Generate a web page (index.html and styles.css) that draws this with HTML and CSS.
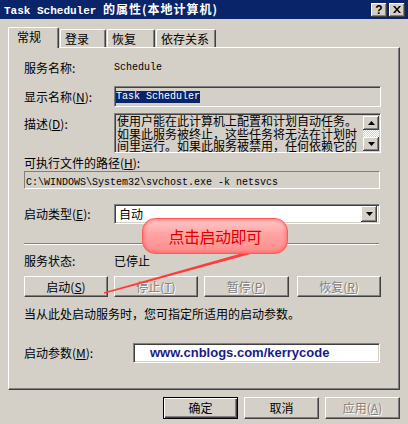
FILE: index.html
```html
<!DOCTYPE html>
<html>
<head>
<meta charset="utf-8">
<link rel="stylesheet" href="styles.css">
</head>
<body>
<div class="titlebar">
  <div class="title"><span class="t-lat">Task Scheduler </span><span class="t-cjk">的属性(本地计算机)</span></div>
  <div class="tb-btns">
    <span class="tb-btn help">?</span>
    <span class="tb-btn close"><svg width="8" height="7" viewBox="0 0 8 7"><path d="M0 0h2l2 2.4L6 0h2L5 3.5L8 7H6L4 4.6L2 7H0l3-3.5z" fill="#000"/></svg></span>
  </div>
</div>

<div class="tabs">
  <div class="tab active">常规</div>
  <div class="tab t2">登录</div>
  <div class="tab t3">恢复</div>
  <div class="tab t4">依存关系</div>
</div>

<div class="panel">
  <div class="row r1"><span class="lbl">服务名称:</span><span class="mono">Schedule</span></div>
  <div class="row r2"><span class="lbl">显示名称(<u>N</u>):</span>
    <div class="field gray disp"><span class="mono sel">Task Scheduler</span></div>
  </div>
  <div class="row r3"><span class="lbl top">描述(<u>D</u>):</span>
    <div class="field gray desc">
      <div class="desc-text">
        <div class="dl">使用户能在此计算机上配置和计划自动任务。</div>
        <div class="dl">如果此服务被终止，这些任务将无法在计划时</div>
        <div class="dl">间里运行。如果此服务被禁用，任何依赖它的</div>
      </div>
      <div class="vscroll">
        <div class="sbtn"><svg width="7" height="4" viewBox="0 0 7 4"><path d="M3.5 0L7 4H0z" fill="#000"/></svg></div>
        <div class="track"></div>
        <div class="sbtn"><svg width="7" height="4" viewBox="0 0 7 4"><path d="M0 0h7L3.5 4z" fill="#000"/></svg></div>
      </div>
    </div>
  </div>
  <div class="row r4"><span>可执行文件的路径(<u>H</u>):</span></div>
  <div class="path"><span class="mono">C:\WINDOWS\System32\svchost.exe -k netsvcs</span></div>
  <div class="row r6"><span class="lbl">启动类型(<u>E</u>):</span>
    <div class="field white combo"><span class="combo-text">自动</span>
      <div class="combo-btn"><svg width="7" height="4" viewBox="0 0 7 4"><path d="M0 0h7L3.5 4z" fill="#000"/></svg></div>
    </div>
  </div>
  <div class="sep"></div>
  <div class="row r7"><span class="lbl">服务状态:</span><span>已停止</span></div>
  <div class="btnrow">
    <div class="btn b1">启动(<u>S</u>)</div>
    <div class="btn b2 dis">停止(<u>T</u>)</div>
    <div class="btn b3 dis">暂停(<u>P</u>)</div>
    <div class="btn b4 dis">恢复(<u>R</u>)</div>
  </div>
  <div class="row r8">当从此处启动服务时，您可指定所适用的启动参数。</div>
  <div class="row r9"><span class="lbl wide">启动参数(<u>M</u>):</span>
    <div class="field white param"><span class="url">www.cnblogs.com/kerrycode</span></div>
  </div>
</div>

<div class="footer">
  <div class="btn fbtn default">确定</div>
  <div class="btn fbtn">取消</div>
  <div class="btn fbtn dis">应用(<u>A</u>)</div>
</div>

<svg class="arrow" width="408" height="424" viewBox="0 0 408 424"><polygon points="252.4,253.6 251.6,250.4 103.8,292.3 104.2,293.7" fill="#ff3b3b"/></svg>
<div class="callout">点击启动即可</div>
</body>
</html>
```
FILE: styles.css
```css
html, body {
  margin: 0;
  padding: 0;
}
body {
  width: 408px;
  height: 424px;
  overflow: hidden;
  position: relative;
  background: #d4d0c8;
  font-family: "Noto Sans CJK SC", sans-serif;
  font-size: 12px;
  line-height: 14px;
  color: #000;
}
u { text-decoration: underline; text-underline-offset: 1px; }

.mono {
  font-family: "Liberation Mono", "Noto Sans CJK SC", monospace;
  font-size: 10px;
}

/* title bar */
.titlebar {
  height: 19px;
  background: #0a246a;
  display: flex;
  align-items: center;
  justify-content: space-between;
  padding: 0 3px 0 4px;
  color: #fff;
}
.title { white-space: pre; line-height: 19px; }
.t-lat {
  font-family: "Liberation Mono", monospace;
  font-weight: bold;
  font-size: 11px;
}
.t-cjk {
  font-weight: bold;
  font-size: 12px;
  letter-spacing: 1px;
}
.tb-btns { display: flex; gap: 2px; }
.tb-btn {
  box-sizing: border-box;
  width: 16px;
  height: 14px;
  background: #d4d0c8;
  box-shadow: inset -1px -1px #404040, inset 1px 1px #fff, inset -2px -2px #808080;
  display: flex;
  align-items: center;
  justify-content: center;
  color: #000;
}
.help {
  font-family: "Liberation Sans", sans-serif;
  font-weight: bold;
  font-size: 12px;
  line-height: 14px;
}
.close svg { display: block; }

/* tabs */
.tabs {
  display: flex;
  align-items: flex-end;
  height: 28px;
  padding-left: 8px;
}
.tab {
  box-sizing: border-box;
  height: 18px;
  border: 1px solid;
  border-color: #fff #404040 transparent #fff;
  border-bottom: none;
  border-radius: 2px 2px 0 0;
  box-shadow: inset -1px 0 #808080;
  padding: 1px 0 0 4px;
  line-height: 16px;
  background: #d4d0c8;
}
.tab.active {
  height: 21px;
  width: 51px;
  margin-bottom: -1px;
  padding-left: 8px;
  position: relative;
  z-index: 1;
}
.t2 { width: 46px; margin-left: 1px; }
.t3 { width: 48px; margin-left: 1px; }
.t4 { width: 60px; margin-left: 1px; }

/* panel */
.panel {
  box-sizing: border-box;
  margin-left: 8px;
  width: 392px;
  height: 343px;
  border: 1px solid;
  border-color: #fff #404040 #404040 #fff;
  box-shadow: inset -1px -1px #808080;
  padding: 0 0 0 15px;
}
.row { display: flex; align-items: center; }
.lbl { width: 90px; flex: none; }
.lbl.top { align-self: flex-start; margin-top: 4px; }
.lbl.wide { width: 109px; }

.r1 { margin-top: 13px; height: 14px; }
.r2 { margin-top: 11px; }
.r3 { margin-top: 6px; }
.r4 { margin-top: 3px; height: 14px; }
.r6 { margin-top: 15px; }
.r7 { margin-top: 9px; height: 14px; }
.r8 { margin-top: 10px; height: 14px; }
.r9 { margin-top: 22px; }

.field {
  box-sizing: border-box;
  border: 1px solid;
  border-color: #808080 #fff #fff #808080;
  box-shadow: inset 1px 1px #404040, inset -1px -1px #d4d0c8;
}
.gray { background: #d4d0c8; }
.white { background: #fff; }

.disp {
  width: 267px;
  height: 21px;
  padding: 1px 0 0 1px;
  line-height: 12px;
}
.sel {
  display: inline-block;
  background: #0a246a;
  color: #fff;
  line-height: 12px;
  height: 12px;
}

.desc {
  width: 267px;
  height: 40px;
  display: flex;
  padding: 1px;
}
.desc-text {
  flex: 1;
  padding-left: 1px;
  white-space: nowrap;
}
.dl {
  height: 12.5px;
  line-height: 12px;
}
.vscroll {
  width: 16px;
  display: flex;
  flex-direction: column;
  flex: none;
  margin-top: 1px;
}
.sbtn {
  box-sizing: border-box;
  height: 14px;
  background: #d4d0c8;
  box-shadow: inset -1px -1px #404040, inset 1px 1px #fff, inset -2px -2px #808080;
  display: flex;
  align-items: center;
  justify-content: center;
}
.sbtn svg { display: block; }
.track {
  height: 8px;
  background: repeating-conic-gradient(#fff 0 25%, #d4d0c8 0 50%) 0 0 / 2px 2px;
}

.path {
  box-sizing: border-box;
  margin-top: 1px;
  width: 356px;
  height: 18px;
  border: 1px solid;
  border-color: #808080 #fff #fff #808080;
  padding-left: 1px;
  line-height: 16px;
}

.combo {
  width: 266px;
  height: 20px;
  display: flex;
  align-items: center;
  justify-content: space-between;
  padding: 2px;
}
.combo-text { padding-left: 2px; line-height: 14px; }
.combo-btn {
  box-sizing: border-box;
  width: 16px;
  height: 16px;
  background: #d4d0c8;
  box-shadow: inset -1px -1px #404040, inset 1px 1px #fff, inset -2px -2px #808080;
  display: flex;
  align-items: center;
  justify-content: center;
}
.combo-btn svg { display: block; }

.sep {
  margin-top: 19px;
  width: 355px;
  height: 0;
  border-top: 1px solid #808080;
  border-bottom: 1px solid #fff;
}

.btnrow {
  margin-top: 8px;
  display: flex;
}
.btn {
  box-sizing: border-box;
  height: 21px;
  border: 1px solid;
  border-color: #fff #404040 #404040 #fff;
  box-shadow: inset -1px -1px #808080;
  background: #d4d0c8;
  display: flex;
  align-items: center;
  justify-content: center;
  line-height: 14px;
}
.btn.dis {
  color: #808080;
  text-shadow: 1px 1px #fff;
}
.b1 { width: 84px; }
.b2 { width: 84px; margin-left: 6px; }
.b3 { width: 85px; margin-left: 6px; }
.b4 { width: 84px; margin-left: 8px; }

.param {
  width: 247px;
  height: 20px;
  padding: 0 0 0 16px;
  display: flex;
  align-items: center;
}
.url {
  font-family: "Liberation Sans", Arial, sans-serif;
  font-weight: bold;
  font-size: 13px;
  color: #1b1b86;
  line-height: 16px;
}

.footer {
  margin-top: 7px;
  display: flex;
  justify-content: flex-end;
  gap: 6px;
  padding-right: 8px;
}
.fbtn { width: 75px; height: 22px; }
.fbtn.default {
  border-color: #000;
  box-shadow: inset 1px 1px #fff, inset -1px -1px #404040, inset -2px -2px #808080;
}

/* annotation overlay */
.arrow {
  position: absolute;
  left: 0;
  top: 0;
  pointer-events: none;
}
.callout {
  position: absolute;
  left: 142px;
  top: 218px;
  box-sizing: border-box;
  width: 146px;
  height: 36px;
  border-radius: 13px;
  border: 1px solid #ff5a5a;
  background: linear-gradient(to bottom, #ffc9c9 0%, #ffa3a3 45%, #ff8c8c 100%);
  box-shadow: inset 0 0 4px #ff5050;
  color: #e10000;
  font-size: 16px;
  line-height: 34px;
  text-align: center;
  letter-spacing: -0.5px;
}
```
